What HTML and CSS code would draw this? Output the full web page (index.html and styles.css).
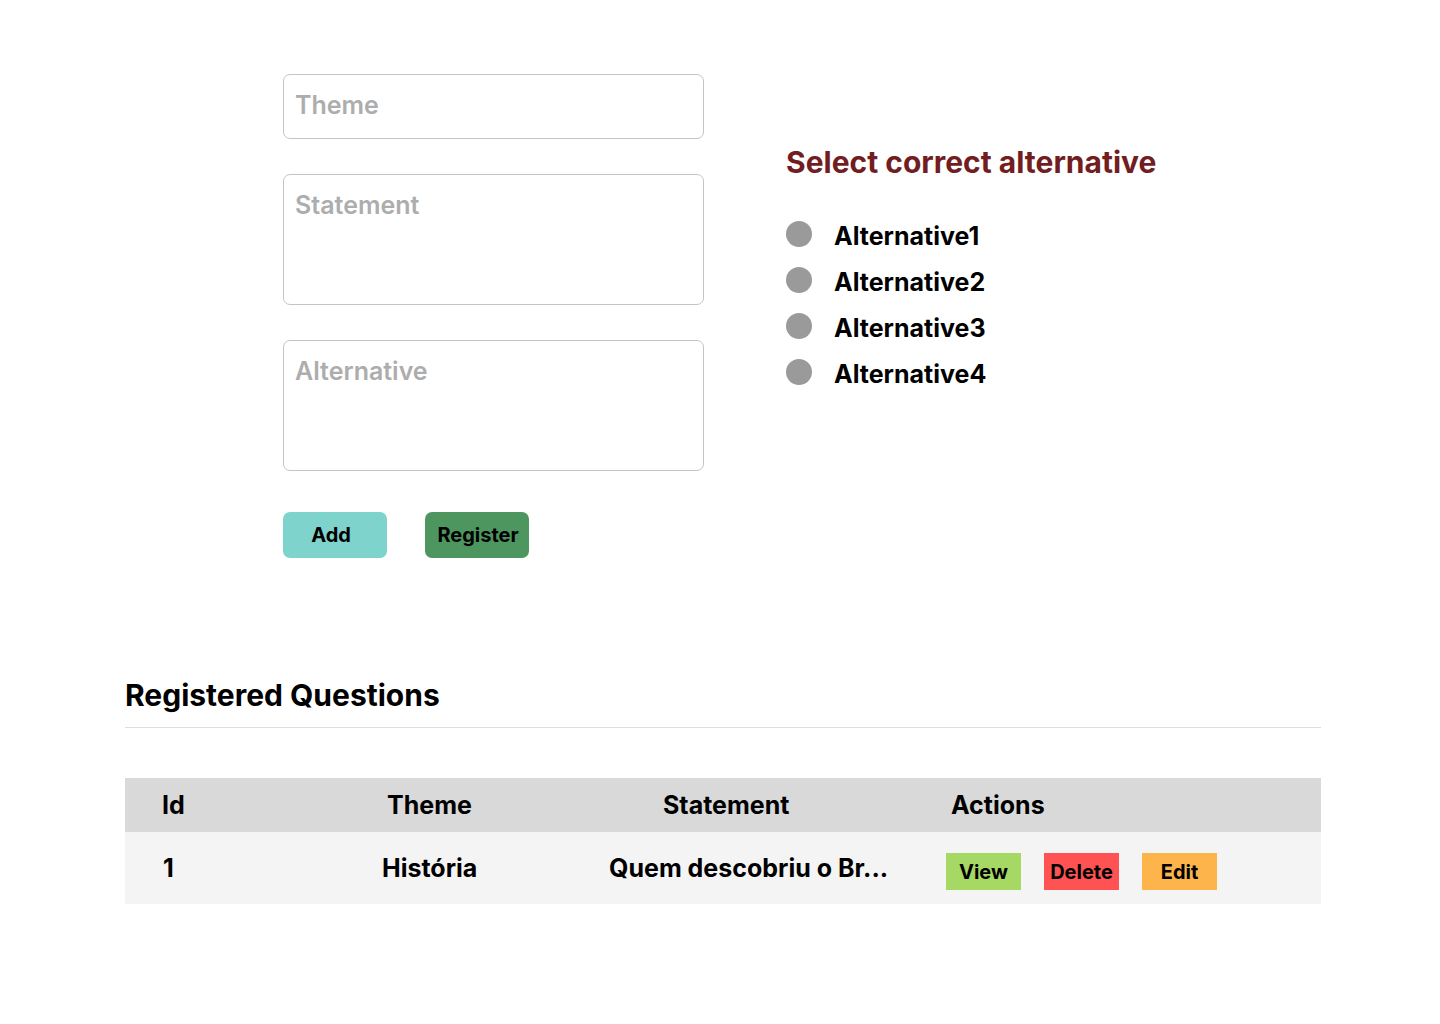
FILE: index.html
```html
<!DOCTYPE html>
<html lang="en">
<head>
<meta charset="utf-8">
<title>Questions</title>
<link rel="stylesheet" href="styles.css">
</head>
<body>
<main class="page">
  <section class="top">
    <form class="form">
      <input class="field field-single" type="text" placeholder="Theme">
      <textarea class="field field-area" placeholder="Statement"></textarea>
      <textarea class="field field-area" placeholder="Alternative"></textarea>
      <div class="form-actions">
        <button type="button" class="btn btn-add">Add</button>
        <button type="button" class="btn btn-register">Register</button>
      </div>
    </form>
    <div class="choices">
      <h2 class="choices-title">Select correct alternative</h2>
      <ul class="options">
        <li class="option"><input class="radio" type="radio" name="alt" id="a1"><label for="a1">Alternative1</label></li>
        <li class="option"><input class="radio" type="radio" name="alt" id="a2"><label for="a2">Alternative2</label></li>
        <li class="option"><input class="radio" type="radio" name="alt" id="a3"><label for="a3">Alternative3</label></li>
        <li class="option"><input class="radio" type="radio" name="alt" id="a4"><label for="a4">Alternative4</label></li>
      </ul>
    </div>
  </section>

  <section class="registered">
    <h2 class="registered-title">Registered Questions</h2>
    <div class="table">
      <div class="thead">
        <div class="th">Id</div>
        <div class="th">Theme</div>
        <div class="th">Statement</div>
        <div class="th">Actions</div>
      </div>
      <div class="trow">
        <div class="td">1</div>
        <div class="td">História</div>
        <div class="td">Quem descobriu o Br...</div>
        <div class="td actions">
          <button type="button" class="act act-view">View</button>
          <button type="button" class="act act-delete">Delete</button>
          <button type="button" class="act act-edit">Edit</button>
        </div>
      </div>
    </div>
  </section>
</main>
</body>
</html>
```

FILE: styles.css
```css
* { box-sizing: border-box; }

html, body {
  margin: 0;
  padding: 0;
  background: #ffffff;
}

body {
  font-family: Inter, "Noto Sans", "Liberation Sans", sans-serif;
  color: #000;
}

.page {
  width: 1440px;
  min-height: 1024px;
}

/* ---------- top ---------- */
.top {
  display: flex;
  padding-left: 283px;
  padding-top: 74px;
}

.form {
  display: flex;
  flex-direction: column;
  gap: 35px;
  width: 421px;
  margin: 0;
}

.field {
  display: block;
  width: 421px;
  margin: 0;
  border: 1px solid #c4c4c4;
  border-radius: 7px;
  background: #fff;
  font-family: Inter, "Noto Sans", sans-serif;
  font-size: 25px;
  font-weight: 600;
  line-height: 29px;
  color: #000;
  padding: 16px 12px 14px 11px;
  outline: none;
  resize: none;
}

.field::placeholder {
  color: #adadad;
  opacity: 1;
}

.field-single {
  height: 65px;
  padding-top: 15px;
  padding-bottom: 19px;
}

.field-area {
  height: 131px;
}

.form-actions {
  display: flex;
  gap: 38px;
  margin-top: 6px;
}

.btn {
  width: 104px;
  height: 46px;
  border: none;
  border-radius: 7px;
  font-family: Inter, "Noto Sans", sans-serif;
  font-size: 20px;
  font-weight: 700;
  color: #000;
  padding: 0;
  cursor: pointer;
}

.btn-add {
  background: #7ed3cc;
  padding-right: 8px;
}

.btn-register {
  background: #4e9660;
  padding-left: 2px;
}

/* ---------- right column ---------- */
.choices {
  margin-left: 82px;
  margin-top: 70px;
}

.choices-title {
  margin: 0;
  font-size: 30px;
  line-height: 36px;
  font-weight: 700;
  color: #721d1f;
}

.options {
  list-style: none;
  margin: 33px 0 0 0;
  padding: 0;
}

.option {
  display: flex;
  align-items: flex-start;
  height: 46px;
}

.radio {
  appearance: none;
  -webkit-appearance: none;
  width: 26px;
  height: 26px;
  margin: 8px 22px 0 0;
  border-radius: 50%;
  background: #9a9a9a;
  border: none;
  flex: none;
}

.option label {
  font-size: 25px;
  font-weight: 700;
  line-height: 46px;
  color: #000;
}

/* ---------- registered ---------- */
.registered {
  margin: 119px 0 0 125px;
  width: 1196px;
}

.registered-title {
  margin: 0;
  font-size: 30px;
  font-weight: 700;
  line-height: 36px;
  padding-bottom: 14px;
  border-bottom: 1px solid #dedede;
}

.table {
  margin-top: 50px;
}

.thead {
  display: grid;
  grid-template-columns: 225px 276px 288px 1fr;
  align-items: center;
  height: 54px;
  padding-left: 37px;
  background: #d9d9d9;
}

.th, .td {
  font-size: 25px;
  font-weight: 700;
  line-height: 30px;
  white-space: nowrap;
}

.trow {
  display: grid;
  grid-template-columns: 219px 227px 337px 1fr;
  align-items: center;
  height: 72px;
  padding-left: 38px;
  background: #f4f4f4;
}

.actions {
  display: flex;
  gap: 23px;
  margin-top: 7px;
}

.act {
  width: 75px;
  height: 37px;
  border: none;
  border-radius: 0;
  padding: 0;
  font-family: Inter, "Noto Sans", sans-serif;
  font-size: 20px;
  font-weight: 700;
  color: #000;
}

.act-view { background: #a6d864; }
.act-delete { background: #ff5252; }
.act-edit { background: #fcb44b; }
```
